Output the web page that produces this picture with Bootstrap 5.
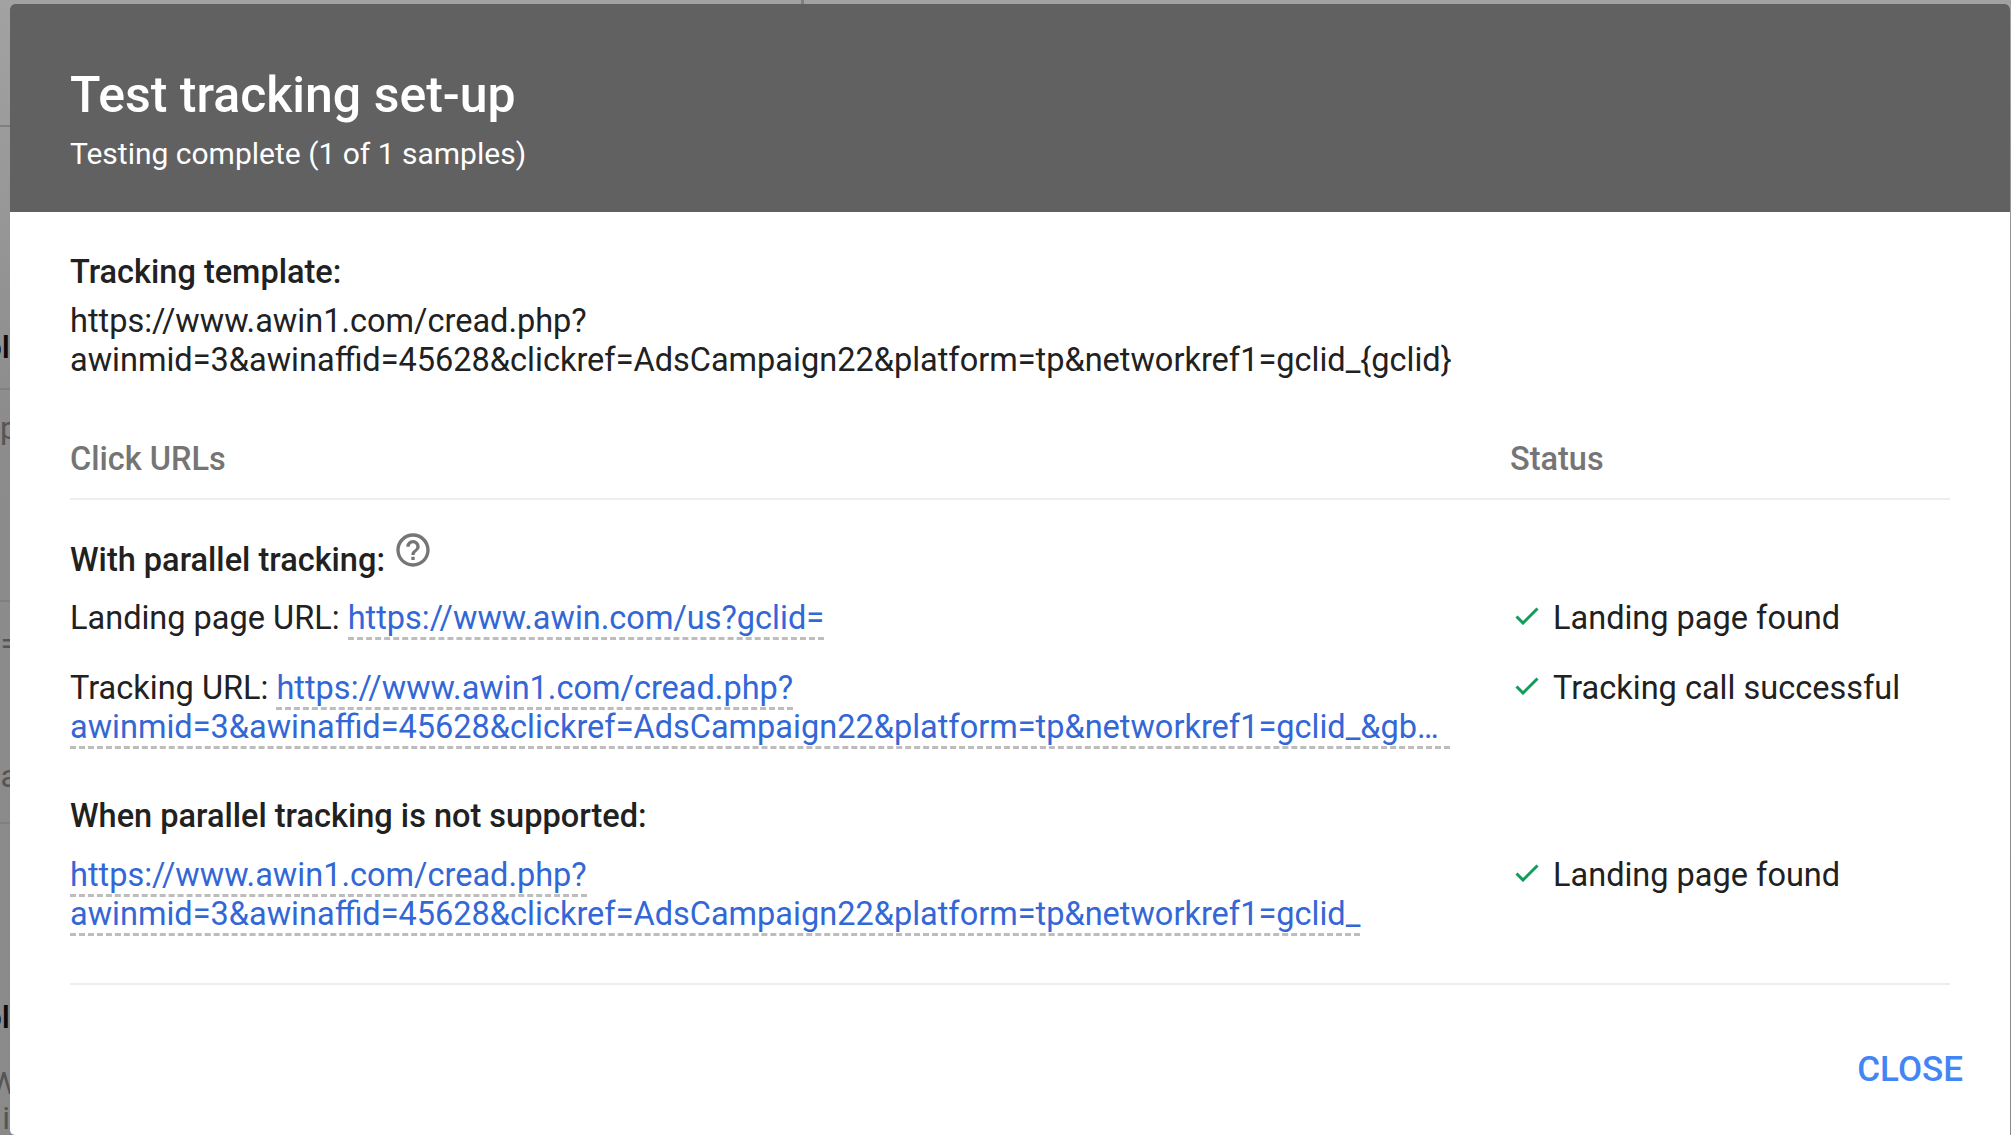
<!DOCTYPE html>
<html lang="en">
<head>
  <meta charset="UTF-8" />
  <title>Test tracking set-up</title>
  <link href="https://cdn.jsdelivr.net/npm/bootstrap@5.3.3/dist/css/bootstrap.min.css" rel="stylesheet" />
  <style>
    html, body { height: 100%; }
    body {
      background: linear-gradient(#a2a2a2, #8c8c8c 420px, #8a8a8a);
      overflow: hidden;
      font-family: Roboto, "Liberation Sans", sans-serif;
      font-size: 32.5px;
      line-height: 39px;
      color: #212121;
    }
    /* dimmed page behind the dialog, only a thin strip shows */
    .behind-line { position: absolute; left: 0; width: 10px; height: 2px; background: #808080; }
    .behind-top { position: absolute; left: 801px; top: 0; width: 3px; height: 4px; background: #7f7f7f; }
    .behind-text {
      position: absolute;
      right: calc(100% - 10px);
      margin-right: -8px;
      white-space: nowrap;
      font-size: 32px;
      line-height: 40px;
      color: #555;
    }
    .behind-strong { color: #0b0b0b; font-weight: 500; margin-right: 0; }
    .behind-flush { margin-right: 0; }
    .dialog-wrap { position: relative; padding: 4px 1px 0 10px; height: 100%; }
    .dialog-box {
      background: #fff;
      height: 100%;
      border-radius: 5px 5px 0 5px;
      overflow: hidden;
    }
    .dialog-head { background: #616161; color: #fff; height: 208px; padding: 58px 60px 0; flex: none; }
    .dialog-title { font-size: 50px; font-weight: 500; line-height: 66px; margin: 0; }
    .dialog-sub { font-size: 30px; line-height: 39px; margin-top: 6px; }
    .dialog-main { padding: 41px 60px 0; }
    .label-strong { font-weight: 500; }
    .tpl-text { margin-top: 10px; }
    .url-head {
      color: #757575;
      font-weight: 500;
      border-bottom: 2px solid #eee;
      margin-top: 60px;
      height: 60px;
    }
    .url-col { width: 1440px; flex: none; }
    .url-link {
      color: #3367d6;
      text-decoration: none;
      border-bottom: 3px dashed #bdbdbd;
    }
    .url-clip {
      display: block;
      width: 1380px;
      height: 41px;
      white-space: nowrap;
      overflow: hidden;
      text-overflow: ellipsis;
    }
    .help-line { height: 49px; }
    .help-icon { width: 40px; height: 40px; vertical-align: 1px; }
    .check-icon { width: 24px; height: 18px; margin: 8px 14px 0 5px; flex: none; }
    .rows-block { border-bottom: 2px solid #eee; padding: 30px 0 49px; }
    .row-landing { margin-top: 20px; }
    .row-tracking { margin-top: 31px; }
    .section-next { margin-top: 48px; }
    .close-row { margin: 65px -13px 0 0; }
    .close-link { color: #4285f4; font-weight: 500; font-size: 35px; text-decoration: none; }
  </style>
</head>
<body>
  <div class="behind-top"></div>
  <div class="behind-line" style="top: 125px"></div>
  <div class="behind-line" style="top: 388px"></div>
  <div class="behind-line" style="top: 600px"></div>
  <div class="behind-line" style="top: 822px"></div>
  <div class="behind-text behind-strong" style="top: 327px">ol</div>
  <div class="behind-text" style="top: 408px">p</div>
  <div class="behind-text" style="top: 623px">=</div>
  <div class="behind-text" style="top: 756px">a</div>
  <div class="behind-text behind-strong" style="top: 997px">ol</div>
  <div class="behind-text" style="top: 1063px">W</div>
  <div class="behind-text behind-flush" style="top: 1098px">i</div>

  <div class="dialog-wrap">
    <div class="dialog-box d-flex flex-column">
      <div class="dialog-head">
        <h1 class="dialog-title">Test tracking set-up</h1>
        <div class="dialog-sub">Testing complete (1 of 1 samples)</div>
      </div>

      <div class="dialog-main flex-grow-1">
        <div class="label-strong">Tracking template:</div>
        <div class="tpl-text">https://www.awin1.com/cread.php?<br />awinmid=3&amp;awinaffid=45628&amp;clickref=AdsCampaign22&amp;platform=tp&amp;networkref1=gclid_{gclid}</div>

        <div class="url-head d-flex">
          <div class="url-col">Click URLs</div>
          <div>Status</div>
        </div>

        <div class="rows-block">
          <div class="label-strong help-line">With parallel tracking:
            <svg class="help-icon" viewBox="0 0 24 24" fill="#757575"><path d="M11 18h2v-2h-2v2zm1-16C6.48 2 2 6.48 2 12s4.48 10 10 10 10-4.48 10-10S17.52 2 12 2zm0 18c-4.41 0-8-3.59-8-8s3.59-8 8-8 8 3.59 8 8-3.59 8-8 8zm0-14c-2.21 0-4 1.79-4 4h2c0-1.1.9-2 2-2s2 .9 2 2c0 2-3 1.75-3 5h2c0-2.25 3-2.5 3-5 0-2.21-1.79-4-4-4z"/></svg>
          </div>

          <div class="d-flex row-landing">
            <div class="url-col">Landing page URL: <a class="url-link" href="#">https://www.awin.com/us?gclid=</a></div>
            <div class="d-flex">
              <svg class="check-icon" viewBox="0 0 24 18" fill="none" stroke="#0f9d58" stroke-width="3"><path d="M1.5 9.5l6.5 6.5L22.5 1.5"/></svg>
              <span>Landing page found</span>
            </div>
          </div>

          <div class="d-flex row-tracking">
            <div class="url-col">
              Tracking URL: <a class="url-link" href="#">https://www.awin1.com/cread.php?</a>
              <a class="url-link url-clip" href="#">awinmid=3&amp;awinaffid=45628&amp;clickref=AdsCampaign22&amp;platform=tp&amp;networkref1=gclid_&amp;gb…</a>
            </div>
            <div class="d-flex">
              <svg class="check-icon" viewBox="0 0 24 18" fill="none" stroke="#0f9d58" stroke-width="3"><path d="M1.5 9.5l6.5 6.5L22.5 1.5"/></svg>
              <span>Tracking call successful</span>
            </div>
          </div>

          <div class="label-strong section-next">When parallel tracking is not supported:</div>

          <div class="d-flex row-landing">
            <div class="url-col">
              <a class="url-link" href="#">https://www.awin1.com/cread.php?<br />awinmid=3&amp;awinaffid=45628&amp;clickref=AdsCampaign22&amp;platform=tp&amp;networkref1=gclid_</a>
            </div>
            <div class="d-flex">
              <svg class="check-icon" viewBox="0 0 24 18" fill="none" stroke="#0f9d58" stroke-width="3"><path d="M1.5 9.5l6.5 6.5L22.5 1.5"/></svg>
              <span>Landing page found</span>
            </div>
          </div>
        </div>

        <div class="close-row d-flex justify-content-end"><a class="close-link" href="#">CLOSE</a></div>
      </div>
    </div>
  </div>
  <script src="https://cdn.jsdelivr.net/npm/bootstrap@5.3.3/dist/js/bootstrap.bundle.min.js"></script>
</body>
</html>
